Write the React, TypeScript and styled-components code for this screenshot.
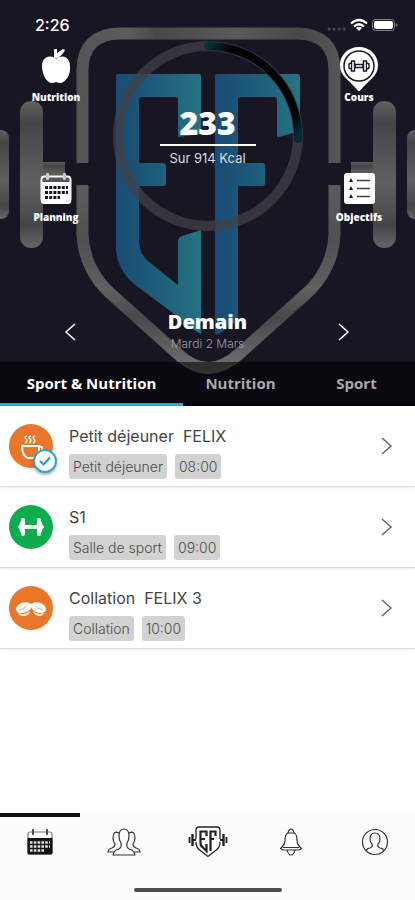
import React, { useState } from "react";
import styled, { createGlobalStyle } from "styled-components";

const display = '"Open Sans", "Noto Sans", sans-serif';
const body = 'Inter, "Liberation Sans", sans-serif';

const GlobalStyle = createGlobalStyle`
  *, *::before, *::after { box-sizing: border-box; }
  body { margin: 0; background: #fff; font-family: ${body}; }
  button { margin: 0; padding: 0; border: 0; background: none; color: inherit; font: inherit; cursor: pointer; }
  a { color: inherit; text-decoration: none; }
  h1, h2, p, ul { margin: 0; padding: 0; font-weight: inherit; }
  ul { list-style: none; }
  svg { display: block; }
`;

const Page = styled.div`
  display: flex;
  flex-direction: column;
  min-height: 100vh;
`;

const Hero = styled.header`
  position: relative;
  isolation: isolate;
  overflow: hidden;
  background: #191624;
  color: #fff;
`;

const Backdrop = styled.svg`
  position: absolute;
  inset: 0;
  width: 100%;
  height: 100%;
  z-index: -1;
`;

const StatusBar = styled.div`
  display: flex;
  align-items: flex-end;
  justify-content: space-between;
  height: 34px;
  padding: 0 16px 0 35px;
`;

const Clock = styled.time`
  font-size: 16px;
  font-weight: 500;
  line-height: 18px;
`;

const StatusIcons = styled.svg`
  width: 72px;
  height: 18px;
`;

const Overview = styled.div`
  display: grid;
  grid-template-columns: 112px 1fr 112px;
  padding-top: 7px;
`;

const ShortcutColumn = styled.nav`
  display: flex;
  flex-direction: column;
  align-items: center;
  gap: 64px;
  padding-top: 6px;
`;

const Shortcut = styled.button`
  display: flex;
  flex-direction: column;
  align-items: center;
  font-family: ${display};
  font-size: 10px;
  font-weight: 800;
  line-height: 12px;

  svg {
    width: 44px;
    height: 44px;
  }
`;

const Summary = styled.section`
  position: relative;
  display: flex;
  flex-direction: column;
  align-items: center;
  justify-self: center;
  width: 190px;
  height: 190px;
  padding-top: 60px;
`;

const Ring = styled.svg`
  position: absolute;
  inset: 0;
  z-index: -1;
`;

const Calories = styled.p`
  width: 96px;
  height: 45px;
  border-bottom: 2px solid #fffdf0;
  font-family: ${display};
  font-size: 32px;
  font-weight: 800;
  line-height: 44px;
  text-align: center;
`;

const Goal = styled.p`
  color: #dddce0;
  font-size: 13px;
  font-weight: 400;
  line-height: 24px;
`;

const DayPicker = styled.section`
  display: flex;
  align-items: center;
  justify-content: space-between;
  height: 131px;
  padding: 71px 59px 0;
`;

const DayArrow = styled.button`
  display: grid;
  place-items: center;
  width: 24px;
  height: 24px;
`;

const Day = styled.div`
  text-align: center;
`;

const DayName = styled.h1`
  font-family: ${display};
  font-size: 20px;
  font-weight: 800;
  line-height: 24px;
`;

const DayDate = styled.p`
  color: #a09da6;
  font-size: 12px;
  font-weight: 300;
  line-height: 20px;
`;

const Tabs = styled.div`
  display: grid;
  grid-template-columns: 183fr 115fr 117fr;
  height: 44px;
  background: rgba(0, 0, 0, 0.58);
`;

const Tab = styled.button<{ $active: boolean }>`
  border-bottom: 3px solid ${(p) => (p.$active ? "#22a9da" : "#000")};
  color: ${(p) => (p.$active ? "#fff" : "#aaa9ad")};
  font-family: ${display};
  font-size: 15px;
  font-weight: 700;
  white-space: nowrap;
`;

const Agenda = styled.ul`
  flex: 1;
`;

const AgendaItem = styled.li`
  border-bottom: 1px solid #dedede;
  box-shadow: 0 1px 2px rgba(0, 0, 0, 0.08);
`;

const AgendaLink = styled.a`
  display: grid;
  grid-template-columns: 44px 1fr 20px;
  column-gap: 16px;
  align-items: center;
  height: 80px;
  padding: 0 18px 0 9px;
`;

const Avatar = styled.span<{ $color: string }>`
  position: relative;
  width: 44px;
  height: 44px;
  border-radius: 50%;
  background: ${(p) => p.$color};
`;

const DoneBadge = styled.span`
  position: absolute;
  right: -4px;
  bottom: -5px;
  display: grid;
  place-items: center;
  width: 24px;
  height: 24px;
  border: 2px solid #35a6d2;
  border-radius: 50%;
  background: #fff;
  box-shadow: 0 2px 3px rgba(0, 0, 0, 0.3);
`;

const Details = styled.div`
  padding-top: 12px;
`;

const Title = styled.h2`
  color: #444;
  font-size: 16px;
  font-weight: 400;
  line-height: 20px;
  white-space: pre;
`;

const Tags = styled.div`
  display: flex;
  gap: 8px;
  margin-top: 8px;
`;

const Tag = styled.span`
  padding: 0 4px;
  border-radius: 3px;
  background: #d2d2d2;
  color: #4c4c4c;
  font-size: 14px;
  font-weight: 300;
  line-height: 25px;
`;

const Footer = styled.footer`
  display: flex;
  flex-direction: column;
  align-items: center;
  background: #fcfcfc;
`;

const BottomNav = styled.nav`
  display: flex;
  justify-content: space-between;
  width: 100%;
`;

const NavLink = styled.a<{ $active?: boolean }>`
  display: grid;
  place-items: center;
  flex: 0 1 80px;
  height: 59px;
  padding-bottom: 5px;
  border-top: 4px solid ${(p) => (p.$active ? "#111" : "transparent")};
`;

const HomeIndicator = styled.div`
  width: 148px;
  height: 4px;
  margin: 16px 0 8px;
  border-radius: 2px;
  background: #4b4b4b;
`;

function Emblem() {
  return (
    <Backdrop viewBox="0 0 415 406" preserveAspectRatio="xMidYMid slice" aria-hidden="true">
      <defs>
        <linearGradient id="letter" x1="0" x2="1">
          <stop offset="0" stopColor="#194c75" />
          <stop offset="0.35" stopColor="#1c5778" />
          <stop offset="1" stopColor="#267382" />
        </linearGradient>
        <linearGradient id="steel" x1="0" x2="0" y1="0" y2="1">
          <stop offset="0" stopColor="#606060" />
          <stop offset="0.15" stopColor="#454545" />
          <stop offset="0.55" stopColor="#606060" />
          <stop offset="0.85" stopColor="#464646" />
          <stop offset="1" stopColor="#666" />
        </linearGradient>
        <linearGradient id="rimTop" gradientUnits="userSpaceOnUse" x1="77" x2="340" y1="0" y2="0">
          <stop offset="0" stopColor="#545454" />
          <stop offset="0.2" stopColor="#5c5c5c" />
          <stop offset="0.3" stopColor="#484848" />
          <stop offset="0.6" stopColor="#5a5a5a" />
          <stop offset="0.85" stopColor="#484848" />
          <stop offset="1" stopColor="#565656" />
        </linearGradient>
        <linearGradient id="rimBottom" gradientUnits="userSpaceOnUse" x1="0" x2="0" y1="185" y2="374">
          <stop offset="0" stopColor="#5c5c5c" />
          <stop offset="0.3" stopColor="#505050" />
          <stop offset="0.55" stopColor="#606060" />
          <stop offset="0.7" stopColor="#484848" />
          <stop offset="1" stopColor="#747474" />
        </linearGradient>
      </defs>
      <g fill="url(#steel)">
        <rect x="-14" y="130" width="23" height="89" rx="8" />
        <rect x="43" y="162" width="22" height="23" />
        <rect x="20" y="101" width="23" height="147" rx="11" />
        <rect x="351" y="162" width="22" height="23" />
        <rect x="373" y="101" width="23" height="147" rx="11" />
        <rect x="407" y="130" width="23" height="89" rx="8" />
      </g>
      <g fill="none" strokeWidth="12">
        <path stroke="url(#rimTop)" d="M82.500 163V70Q83 34 120 33.500H297Q334 34 334.500 70V163" />
        <path
          stroke="url(#rimBottom)"
          d="M82.500 185V234C83 257 94 279 111 294L178 354Q208 382 239 354L306 294C323 279 334 257 334.500 234V185"
        />
      </g>
      <g fill="url(#letter)">
        <path d="M118 74H199Q201 74 201 76V134L178 137V100Q178 97 175 97H142Q139 97 139 100V163H163Q166 163 166 166V183Q166 186 163 186H139V242Q140 255 149 262L178 285V240Q179 237 182 236L201 230V334Q190 328 181 319L134 284Q116 269 116 247V76Q116 74 118 74Z" />
        <path d="M217 74H298Q300 74 300 76V131L279 137Q277 138 277 135V100Q277 97 274 97H241Q238 97 238 100V163H262Q265 163 265 166V183Q265 186 262 186H238V320L222 332Q215 337 215 332V76Q215 74 217 74Z" />
      </g>
    </Backdrop>
  );
}

function CalorieRing({ eaten, goal }: { eaten: number; goal: number }) {
  const length = 2 * Math.PI * 90;
  return (
    <Ring viewBox="0 0 190 190" aria-hidden="true">
      <defs>
        <linearGradient id="progress" gradientUnits="userSpaceOnUse" x1="185" y1="95" x2="95" y2="185">
          <stop offset="0" stopColor="#023238" />
          <stop offset="0.15" stopColor="#000205" />
          <stop offset="0.85" stopColor="#000205" />
          <stop offset="1" stopColor="#032c34" />
        </linearGradient>
      </defs>
      <circle cx="95" cy="95" r="90" fill="none" stroke="#414046" strokeOpacity="0.72" strokeWidth="10" />
      <circle
        cx="95"
        cy="95"
        r="90"
        fill="none"
        stroke="url(#progress)"
        strokeWidth="8"
        strokeLinecap="round"
        strokeDasharray={`${(length * eaten) / goal} ${length}`}
        transform="rotate(-90 95 95)"
      />
    </Ring>
  );
}

function StatusGlyphs() {
  return (
    <StatusIcons viewBox="0 0 72 18" fill="#fff" aria-hidden="true">
      <g fill="#4c4a56">
        <circle cx="2" cy="13" r="1.500" />
        <circle cx="7" cy="13" r="1.500" />
        <circle cx="12" cy="13" r="1.500" />
        <circle cx="17" cy="13" r="1.500" />
      </g>
      <g fill="none" stroke="#fff" strokeWidth="2.200">
        <path d="M24 7.500Q32 .5 40 7.500" />
        <path d="M27 10.500Q32 6 37 10.500" />
      </g>
      <path d="M29 12Q32 9.500 35 12L32 15Z" />
      <rect x="45.500" y="3.500" width="22" height="11" rx="3" fill="none" stroke="#85838c" />
      <rect x="47" y="5" width="19" height="8" rx="2" />
      <path d="M69 7Q72 9 69 11Z" fill="#85838c" />
    </StatusIcons>
  );
}

function AppleIcon() {
  return (
    <svg viewBox="0 0 44 44" fill="#fff" aria-hidden="true">
      <path d="M22 12C16 7 8 10 8 19C8 28 13 36 18 36Q20 36 22 35Q24 36 27 36C32 35 37 27 36 19C36 10 28 7 22 12Z" />
      <path d="M20 12V2H23V6L29 2L31 3Q29 8 23 11Z" />
    </svg>
  );
}

function CalendarIcon() {
  return (
    <svg viewBox="0 0 44 44" aria-hidden="true">
      <rect x="7.500" y="9.500" width="29" height="26" rx="3" fill="#55545a" stroke="#fff" strokeWidth="2" />
      <path d="M7 15H37V34Q37 37 34 37H10Q7 37 7 34Z" fill="#fff" />
      <g fill="#ccc">
        <rect x="12" y="6" width="3" height="7" rx="1" />
        <rect x="29" y="6" width="3" height="7" rx="1" />
      </g>
      <g stroke="#191624" strokeWidth="3" strokeDasharray="3 1.200">
        <path d="M11 20.500H34M11 25.500H34M11 30.500H26" />
      </g>
    </svg>
  );
}

function PinIcon() {
  return (
    <svg viewBox="0 0 44 44" aria-hidden="true">
      <path d="M22 0C11 0 3 8 3 18C3 30 12 32 22 45C32 32 41 30 41 18C41 8 33 0 22 0Z" fill="#fff" />
      <circle cx="22" cy="19" r="15" fill="none" stroke="#191624" strokeWidth="1.500" />
      <g fill="#fff" stroke="#191624" strokeWidth="1.400">
        <path d="M18 17.500H26V20.500H18Z" />
        <path d="M17.500 14V24H14.500V14ZM26.500 14V24H29.500V14Z" />
        <path d="M14 16L12 17V21L14 22M30 16L32 17V21L30 22" />
      </g>
    </svg>
  );
}

function ChecklistIcon() {
  return (
    <svg viewBox="0 0 44 44" aria-hidden="true">
      <rect x="7" y="6" width="31" height="31" rx="3" fill="#fff" />
      <g fill="#191624">
        <path d="M14 11L16 15H12ZM14 19L16 23H12ZM14 27L16 31H12Z" />
      </g>
      <path d="M20 13.500H33M20 21.500H33M20 29.500H33" stroke="#44424c" strokeWidth="1.600" />
    </svg>
  );
}

function Chevron({ flip = false, color }: { flip?: boolean; color: string }) {
  return (
    <svg width="20" height="20" viewBox="0 0 20 20" fill="none" stroke={color} strokeWidth="1.500" aria-hidden="true">
      <path d={flip ? "M14 2L5 10L14 18" : "M5 2L14 10L5 18"} />
    </svg>
  );
}

function CoffeeIcon() {
  return (
    <svg viewBox="0 0 44 44" fill="none" stroke="#fff" strokeWidth="2" aria-hidden="true">
      <path d="M13 22H30Q31 33 24 34H19Q13 32 13 22Z" />
      <path d="M30 23Q34 22 33 26Q32 29 28 30" />
      <g strokeWidth="1.600">
        <path d="M16 19Q19 17 17 15T18 12M20 19Q23 17 21 15T22 12M24 19Q27 17 25 15T26 12" />
      </g>
    </svg>
  );
}

function DumbbellIcon() {
  return (
    <svg viewBox="0 0 44 44" fill="#fff" aria-hidden="true">
      <rect x="15" y="20" width="14" height="4" />
      <rect x="12" y="13" width="4" height="18" rx="2" />
      <rect x="28" y="13" width="4" height="18" rx="2" />
      <path d="M12 16Q8 22 12 28ZM32 16Q36 22 32 28Z" />
      <path d="M9 21H12V23H9ZM32 21H35V23H32Z" />
    </svg>
  );
}

function NutsIcon() {
  return (
    <svg viewBox="0 0 44 44" aria-hidden="true">
      <g fill="#fff">
        <path d="M7 24C7 17 17 14 22 18Q24 23 17 26Q9 29 7 24Z" />
        <path d="M37 24C37 17 27 14 22 18Q21 23 27 26Q35 29 37 24Z" />
        <path d="M9 27Q16 30 21 25Q20 30 14 30Q10 30 9 27ZM35 27Q29 30 24 25Q25 29 30 30Q34 30 35 27Z" />
      </g>
      <path d="M10 24Q15 24 18 19M34 24Q29 24 26 19" fill="none" stroke="#e9762b" strokeOpacity="0.6" />
    </svg>
  );
}

function NavCalendar() {
  return (
    <svg width="28" height="28" viewBox="0 0 28 28" aria-hidden="true">
      <rect x="2" y="4" width="24" height="22" rx="2" fill="#fff" stroke="#777" strokeWidth="1.200" />
      <path d="M1.500 10H26.500V25Q26 26.500 25 26.500H3Q1.500 26.500 1.500 25Z" fill="#161616" />
      <path d="M7 1V7M21 1V7" stroke="#333" strokeWidth="1.600" />
      <path d="M4 14.500H24M4 18.500H24M4 22.500H18" stroke="#ddd" strokeWidth="2.600" strokeDasharray="2.600 1.200" />
    </svg>
  );
}

function NavPeople() {
  return (
    <svg width="34" height="28" viewBox="0 0 34 28" fill="#fcfcfc" stroke="#333" strokeWidth="1.200" strokeLinejoin="round" aria-hidden="true">
      <path d="M12 5Q6 2 6 10Q6 13 8 16Q8 19 5 20Q1 21 1 24H8M22 5Q28 2 28 10Q28 13 26 16Q26 19 29 20Q33 21 33 24H26" />
      <path d="M17 1Q12 1 12 8Q12 12 14 15Q15 19 12 21Q7 22 6 27H28Q27 22 22 21Q19 19 20 15Q22 12 22 8Q22 1 17 1Z" />
    </svg>
  );
}

function NavBrand() {
  return (
    <svg width="40" height="32" viewBox="0 0 40 32" fill="none" stroke="#222" aria-hidden="true">
      <path d="M8 13V4Q8 1 11 1H29Q32 1 32 4V13M8 16Q8 22 13 25L20 30.500L27 25Q32 22 32 16" strokeWidth="1.300" />
      <path d="M18.500 10V5.500H12.500V17Q12.500 20 15 21.500L18.500 25V18M13 13H17" strokeWidth="2.200" />
      <path d="M27.500 10V5.500H22.500V25M23 13H26" strokeWidth="2.200" />
      <path d="M4.500 8V20M35.500 8V20" strokeWidth="2.400" />
      <path d="M1.500 11V17M38.500 11V17M5 14H8M32 14H35" strokeWidth="1.800" />
    </svg>
  );
}

function NavBell() {
  return (
    <svg width="24" height="28" viewBox="0 0 24 28" fill="none" stroke="#333" strokeWidth="1.200" strokeLinejoin="round" aria-hidden="true">
      <path d="M9 5Q6 6 6 12Q6 16 4 18L1.500 20.500L4 22H20L22.500 20.500L20 18Q18 16 18 12Q18 6 15 5Z" />
      <path d="M9 5Q10 1 12 1T15 5M4 19.500H20M8 22Q9 27 12 27T16 22" />
    </svg>
  );
}

function NavProfile() {
  return (
    <svg width="28" height="28" viewBox="0 0 28 28" fill="none" stroke="#333" strokeWidth="1.200" aria-hidden="true">
      <circle cx="14" cy="14" r="12.500" />
      <path d="M14 5Q9 5 9 11Q9 14 11 16Q12 19 9 20Q6 20 5 23M14 5Q19 5 19 11Q19 14 17 16Q16 19 19 20Q22 20 23 23" />
    </svg>
  );
}

const tabs = ["Sport & Nutrition", "Nutrition", "Sport"];

const agenda = [
  { title: "Petit déjeuner  FELIX", place: "Petit déjeuner", time: "08:00", color: "#e9762b", icon: <CoffeeIcon />, done: true },
  { title: "S1", place: "Salle de sport", time: "09:00", color: "#0bad4c", icon: <DumbbellIcon />, done: false },
  { title: "Collation  FELIX 3", place: "Collation", time: "10:00", color: "#e9762b", icon: <NutsIcon />, done: false },
];

export default function App() {
  const [active, setActive] = useState(0);

  return (
    <Page>
      <GlobalStyle />
      <Hero>
        <Emblem />
        <StatusBar>
          <Clock>2:26</Clock>
          <StatusGlyphs />
        </StatusBar>
        <Overview>
          <ShortcutColumn>
            <Shortcut><AppleIcon />Nutrition</Shortcut>
            <Shortcut><CalendarIcon />Planning</Shortcut>
          </ShortcutColumn>
          <Summary>
            <CalorieRing eaten={233} goal={914} />
            <Calories>233</Calories>
            <Goal>Sur 914 Kcal</Goal>
          </Summary>
          <ShortcutColumn>
            <Shortcut><PinIcon />Cours</Shortcut>
            <Shortcut><ChecklistIcon />Objectifs</Shortcut>
          </ShortcutColumn>
        </Overview>
        <DayPicker>
          <DayArrow aria-label="Jour précédent"><Chevron flip color="#fff" /></DayArrow>
          <Day>
            <DayName>Demain</DayName>
            <DayDate>Mardi 2 Mars</DayDate>
          </Day>
          <DayArrow aria-label="Jour suivant"><Chevron color="#fff" /></DayArrow>
        </DayPicker>
        <Tabs role="tablist">
          {tabs.map((label, i) => (
            <Tab key={label} role="tab" aria-selected={i === active} $active={i === active} onClick={() => setActive(i)}>
              {label}
            </Tab>
          ))}
        </Tabs>
      </Hero>
      <Agenda>
        {agenda.map((item) => (
          <AgendaItem key={item.time}>
            <AgendaLink href="#">
              <Avatar $color={item.color}>
                {item.icon}
                {item.done && (
                  <DoneBadge>
                    <svg width="14" height="14" viewBox="0 0 14 14" fill="none" stroke="#239fce" strokeWidth="2.200" aria-hidden="true">
                      <path d="M2 7L5.500 10.500L12 3.500" />
                    </svg>
                  </DoneBadge>
                )}
              </Avatar>
              <Details>
                <Title>{item.title}</Title>
                <Tags>
                  <Tag>{item.place}</Tag>
                  <Tag>{item.time}</Tag>
                </Tags>
              </Details>
              <Chevron color="#666" />
            </AgendaLink>
          </AgendaItem>
        ))}
      </Agenda>
      <Footer>
        <BottomNav>
          <NavLink href="#" $active aria-label="Planning"><NavCalendar /></NavLink>
          <NavLink href="#" aria-label="Communauté"><NavPeople /></NavLink>
          <NavLink href="#" aria-label="Accueil"><NavBrand /></NavLink>
          <NavLink href="#" aria-label="Notifications"><NavBell /></NavLink>
          <NavLink href="#" aria-label="Profil"><NavProfile /></NavLink>
        </BottomNav>
        <HomeIndicator />
      </Footer>
    </Page>
  );
}
